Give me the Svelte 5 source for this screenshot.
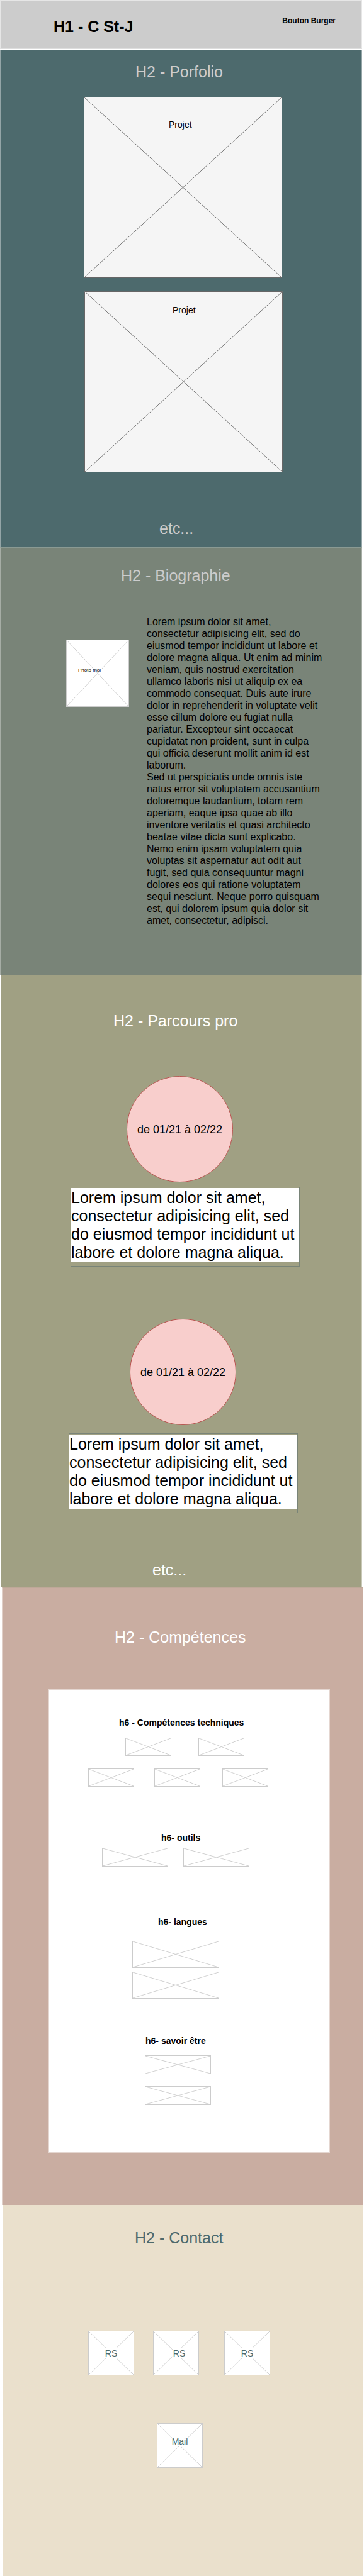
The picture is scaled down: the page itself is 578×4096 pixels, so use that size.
<script>
  const bio = [
    'Lorem ipsum dolor sit amet, consectetur adipisicing elit, sed do eiusmod tempor incididunt ut labore et dolore magna aliqua. Ut enim ad minim veniam, quis nostrud exercitation ullamco laboris nisi ut aliquip ex ea commodo consequat. Duis aute irure dolor in reprehenderit in voluptate velit esse cillum dolore eu fugiat nulla pariatur. Excepteur sint occaecat cupidatat non proident, sunt in culpa qui officia deserunt mollit anim id est laborum.',
    'Sed ut perspiciatis unde omnis iste natus error sit voluptatem accusantium doloremque laudantium, totam rem aperiam, eaque ipsa quae ab illo inventore veritatis et quasi architecto beatae vitae dicta sunt explicabo. Nemo enim ipsam voluptatem quia voluptas sit aspernatur aut odit aut fugit, sed quia consequuntur magni dolores eos qui ratione voluptatem sequi nesciunt. Neque porro quisquam est, qui dolorem ipsum quia dolor sit amet, consectetur, adipisci.'
  ];
  const jobText =
    'Lorem ipsum dolor sit amet, consectetur adipisicing elit, sed do eiusmod tempor incididunt ut labore et dolore magna aliqua.';
</script>

{#snippet cross()}
  <svg class="cross" viewBox="0 0 100 100" preserveAspectRatio="none" aria-hidden="true">
    <path d="M0 0L100 100M100 0L0 100" vector-effect="non-scaling-stroke" />
  </svg>
{/snippet}

{#snippet frame(kind)}
  <div class="frame {kind}">{@render cross()}</div>
{/snippet}

<div class="page">
  <header>
    <h1>H1 - C St-J</h1>
    <button type="button">Bouton Burger</button>
  </header>

  <section class="portfolio">
    <h2>H2 - Porfolio</h2>
    <div class="frame project first">{@render cross()}<span>Projet</span></div>
    <div class="frame project second">{@render cross()}<span>Projet</span></div>
    <p class="more">etc...</p>
  </section>

  <section class="biography">
    <h2>H2 - Biographie</h2>
    <div class="about">
      <div class="frame photo">{@render cross()}<span>Photo moi</span></div>
      <div class="text">
        {#each bio as paragraph}<p>{paragraph}</p>{/each}
      </div>
    </div>
  </section>

  <section class="career">
    <h2>H2 - Parcours pro</h2>
    <article class="job first">
      <div class="date">de 01/21 à 02/22</div>
      <div class="note"><p>{jobText}</p></div>
    </article>
    <article class="job second">
      <div class="date">de 01/21 à 02/22</div>
      <div class="note"><p>{jobText}</p></div>
    </article>
    <p class="more">etc...</p>
  </section>

  <section class="skills">
    <h2>H2 - Compétences</h2>
    <div class="panel">
      <h6 class="technical">h6 - Compétences techniques</h6>
      <div class="row pair">
        {@render frame('small')}
        {@render frame('small')}
      </div>
      <div class="row trio">
        {@render frame('small')}
        {@render frame('small')}
        {@render frame('small')}
      </div>
      <h6 class="tools">h6- outils</h6>
      <div class="row toolset">
        {@render frame('medium')}
        {@render frame('medium')}
      </div>
      <h6 class="languages">h6- langues</h6>
      <div class="stack langset">
        {@render frame('large')}
        {@render frame('large')}
      </div>
      <h6 class="soft">h6- savoir être</h6>
      <div class="stack softset">
        {@render frame('medium')}
        {@render frame('medium')}
      </div>
    </div>
  </section>

  <section class="contact">
    <h2>H2 - Contact</h2>
    <nav class="row social">
      <a class="frame tile" href="#rs1">{@render cross()}<span>RS</span></a>
      <a class="frame tile middle" href="#rs2">{@render cross()}<span>RS</span></a>
      <a class="frame tile" href="#rs3">{@render cross()}<span>RS</span></a>
    </nav>
    <a class="frame tile mail" href="#mail">{@render cross()}<span>Mail</span></a>
  </section>
</div>

<style>
  :global(body) {
    margin: 0;
    background: #fff;
  }
  .page {
    font-family: 'Liberation Sans', Arial, sans-serif;
    color: #000;
  }
  .page * {
    box-sizing: border-box;
  }
  h1, h2, h6, p {
    margin: 0;
  }
  header {
    display: flex;
    justify-content: space-between;
    align-items: flex-start;
    height: 78px;
    margin-right: 3px;
    padding: 27px 41px 0 84px;
    background: #ccc;
    border: 1px solid #e6e6e6;
    border-bottom-color: #ddd;
  }
  h1 {
    font-size: 25px;
    line-height: 28px;
  }
  button {
    margin: -2px 0 0;
    padding: 0;
    border: 0;
    background: none;
    color: #000;
    font: bold 12px/14px 'Liberation Sans', Arial, sans-serif;
  }
  section {
    display: flow-root;
  }
  h2, .more {
    font-size: 25px;
    line-height: 28px;
    font-weight: 400;
    white-space: nowrap;
  }

  .frame {
    position: relative;
    border: 1px solid #ccc;
    background: #fff;
    flex: none;
  }
  .cross {
    position: absolute;
    inset: 0;
    width: 100%;
    height: 100%;
    fill: none;
    stroke: #d0d0d0;
    stroke-width: 1px;
  }
  .frame span {
    position: relative;
  }
  .row {
    display: flex;
  }

  .portfolio {
    margin: 1px 3px 0 0;
    padding: 21px 0 16px;
    background: #4d6a6d;
    border-left: 1px solid #94a5a7;
    border-right: 1px solid #94a5a7;
    color: #ccc;
  }
  .portfolio h2 {
    padding-left: 214px;
  }
  .project {
    width: 315px;
    height: 288px;
    background: #f5f5f5;
    border-color: #666;
    border-radius: 1px;
    color: #000;
    font-size: 14px;
    line-height: 16px;
  }
  .project .cross {
    stroke: #777;
  }
  .project.first {
    margin: 26px 0 0 132px;
    padding: 35px 0 0 134px;
  }
  .project.second {
    margin: 21px 0 0 133px;
    padding: 21px 0 0 139px;
  }
  .portfolio .more {
    padding: 75px 0 0 252px;
  }

  .biography {
    margin-right: 3px;
    padding: 30px 0 77px;
    background: #798478;
    border: 1px solid #a6ada5;
    border-top-color: #8a9a93;
    border-bottom: 0;
  }
  .biography h2 {
    padding-left: 191px;
    color: #ccc;
  }
  .about {
    display: flex;
    align-items: flex-start;
    gap: 28px;
    padding: 50px 60px 0 104px;
  }
  .photo {
    width: 100px;
    height: 107px;
    margin-top: 38px;
    padding: 43px 0 0 18px;
    font-size: 8px;
    line-height: 10px;
  }
  .text {
    flex: 1;
    font-size: 16px;
    line-height: 19px;
  }

  .career {
    margin: 0 3px 0 2px;
    padding: 58px 0 14px;
    background: #a0a083;
    border-top: 1px solid #b4b49d;
    border-right: 1px solid #c8c8b6;
  }
  .career h2 {
    padding-left: 178px;
    color: #fff;
  }
  .job.first {
    padding: 74px 0 0 110px;
  }
  .job.second {
    padding: 83px 0 0 107px;
  }
  .date {
    display: flex;
    align-items: center;
    justify-content: center;
    width: 169px;
    height: 169px;
    border: 1px solid #b85450;
    border-radius: 50%;
    background: #f8cecc;
    font-size: 18px;
    line-height: 20px;
  }
  .first .date {
    margin-left: 89px;
  }
  .second .date {
    margin-left: 97px;
  }
  .note {
    width: 364px;
    height: 127px;
    margin-top: 7px;
    padding-top: 1px;
    border: 1px solid #798478;
  }
  .second .note {
    margin-top: 13px;
  }
  .note p {
    padding: 1px 0;
    background: #fff;
    font-size: 25px;
    line-height: 29px;
  }
  .career .more {
    padding: 76px 0 0 240px;
    color: #fff;
  }

  .skills {
    margin: 0 1px 0 3px;
    padding: 64px 0 83px;
    background: #c9ada1;
    border-top: 1px solid #bda898;
    border-left: 1px solid #dfcec7;
  }
  .skills h2 {
    padding-left: 178px;
    color: #fff;
  }
  .panel {
    margin: 69px 53px 0 73px;
    padding: 44px 0 75px;
    background: #fff;
    border: 1px solid #e4d6d0;
  }
  h6 {
    font-size: 14px;
    line-height: 16px;
    white-space: nowrap;
  }
  .small {
    width: 73px;
    height: 29px;
  }
  .medium {
    width: 105px;
    height: 30px;
  }
  .large {
    width: 138px;
    height: 43px;
  }
  .technical {
    padding-left: 111px;
  }
  .pair {
    gap: 43px;
    padding: 16px 0 0 121px;
  }
  .trio {
    display: grid;
    grid-template-columns: 105px 108px 73px;
    padding: 20px 0 0 62px;
  }
  .tools {
    padding: 73px 0 0 178px;
  }
  .toolset {
    gap: 24px;
    padding: 8px 0 0 84px;
  }
  .languages {
    padding: 80px 0 0 173px;
  }
  .stack {
    display: flex;
    flex-direction: column;
  }
  .langset {
    gap: 6px;
    padding: 22px 0 0 132px;
  }
  .soft {
    padding: 59px 0 0 153px;
  }
  .softset {
    gap: 19px;
    padding: 15px 0 0 152px;
  }

  .contact {
    margin: 0 1px 0 4px;
    padding: 38px 0 172px;
    background: #eae0cc;
    color: #4d6a6d;
  }
  .contact h2 {
    padding-left: 210px;
  }
  .social {
    display: grid;
    grid-template-columns: 103px 113px 73px;
    padding: 134px 0 0 136px;
  }
  .tile {
    display: flex;
    align-items: center;
    justify-content: center;
    width: 73px;
    height: 71px;
    color: #4d6a6d;
    font-size: 14px;
    line-height: 16px;
    text-decoration: none;
  }
  .tile span {
    background: #fff;
  }
  .middle {
    padding-left: 10px;
  }
  .mail {
    margin: 76px 0 0 245px;
    padding-bottom: 14px;
  }
</style>
